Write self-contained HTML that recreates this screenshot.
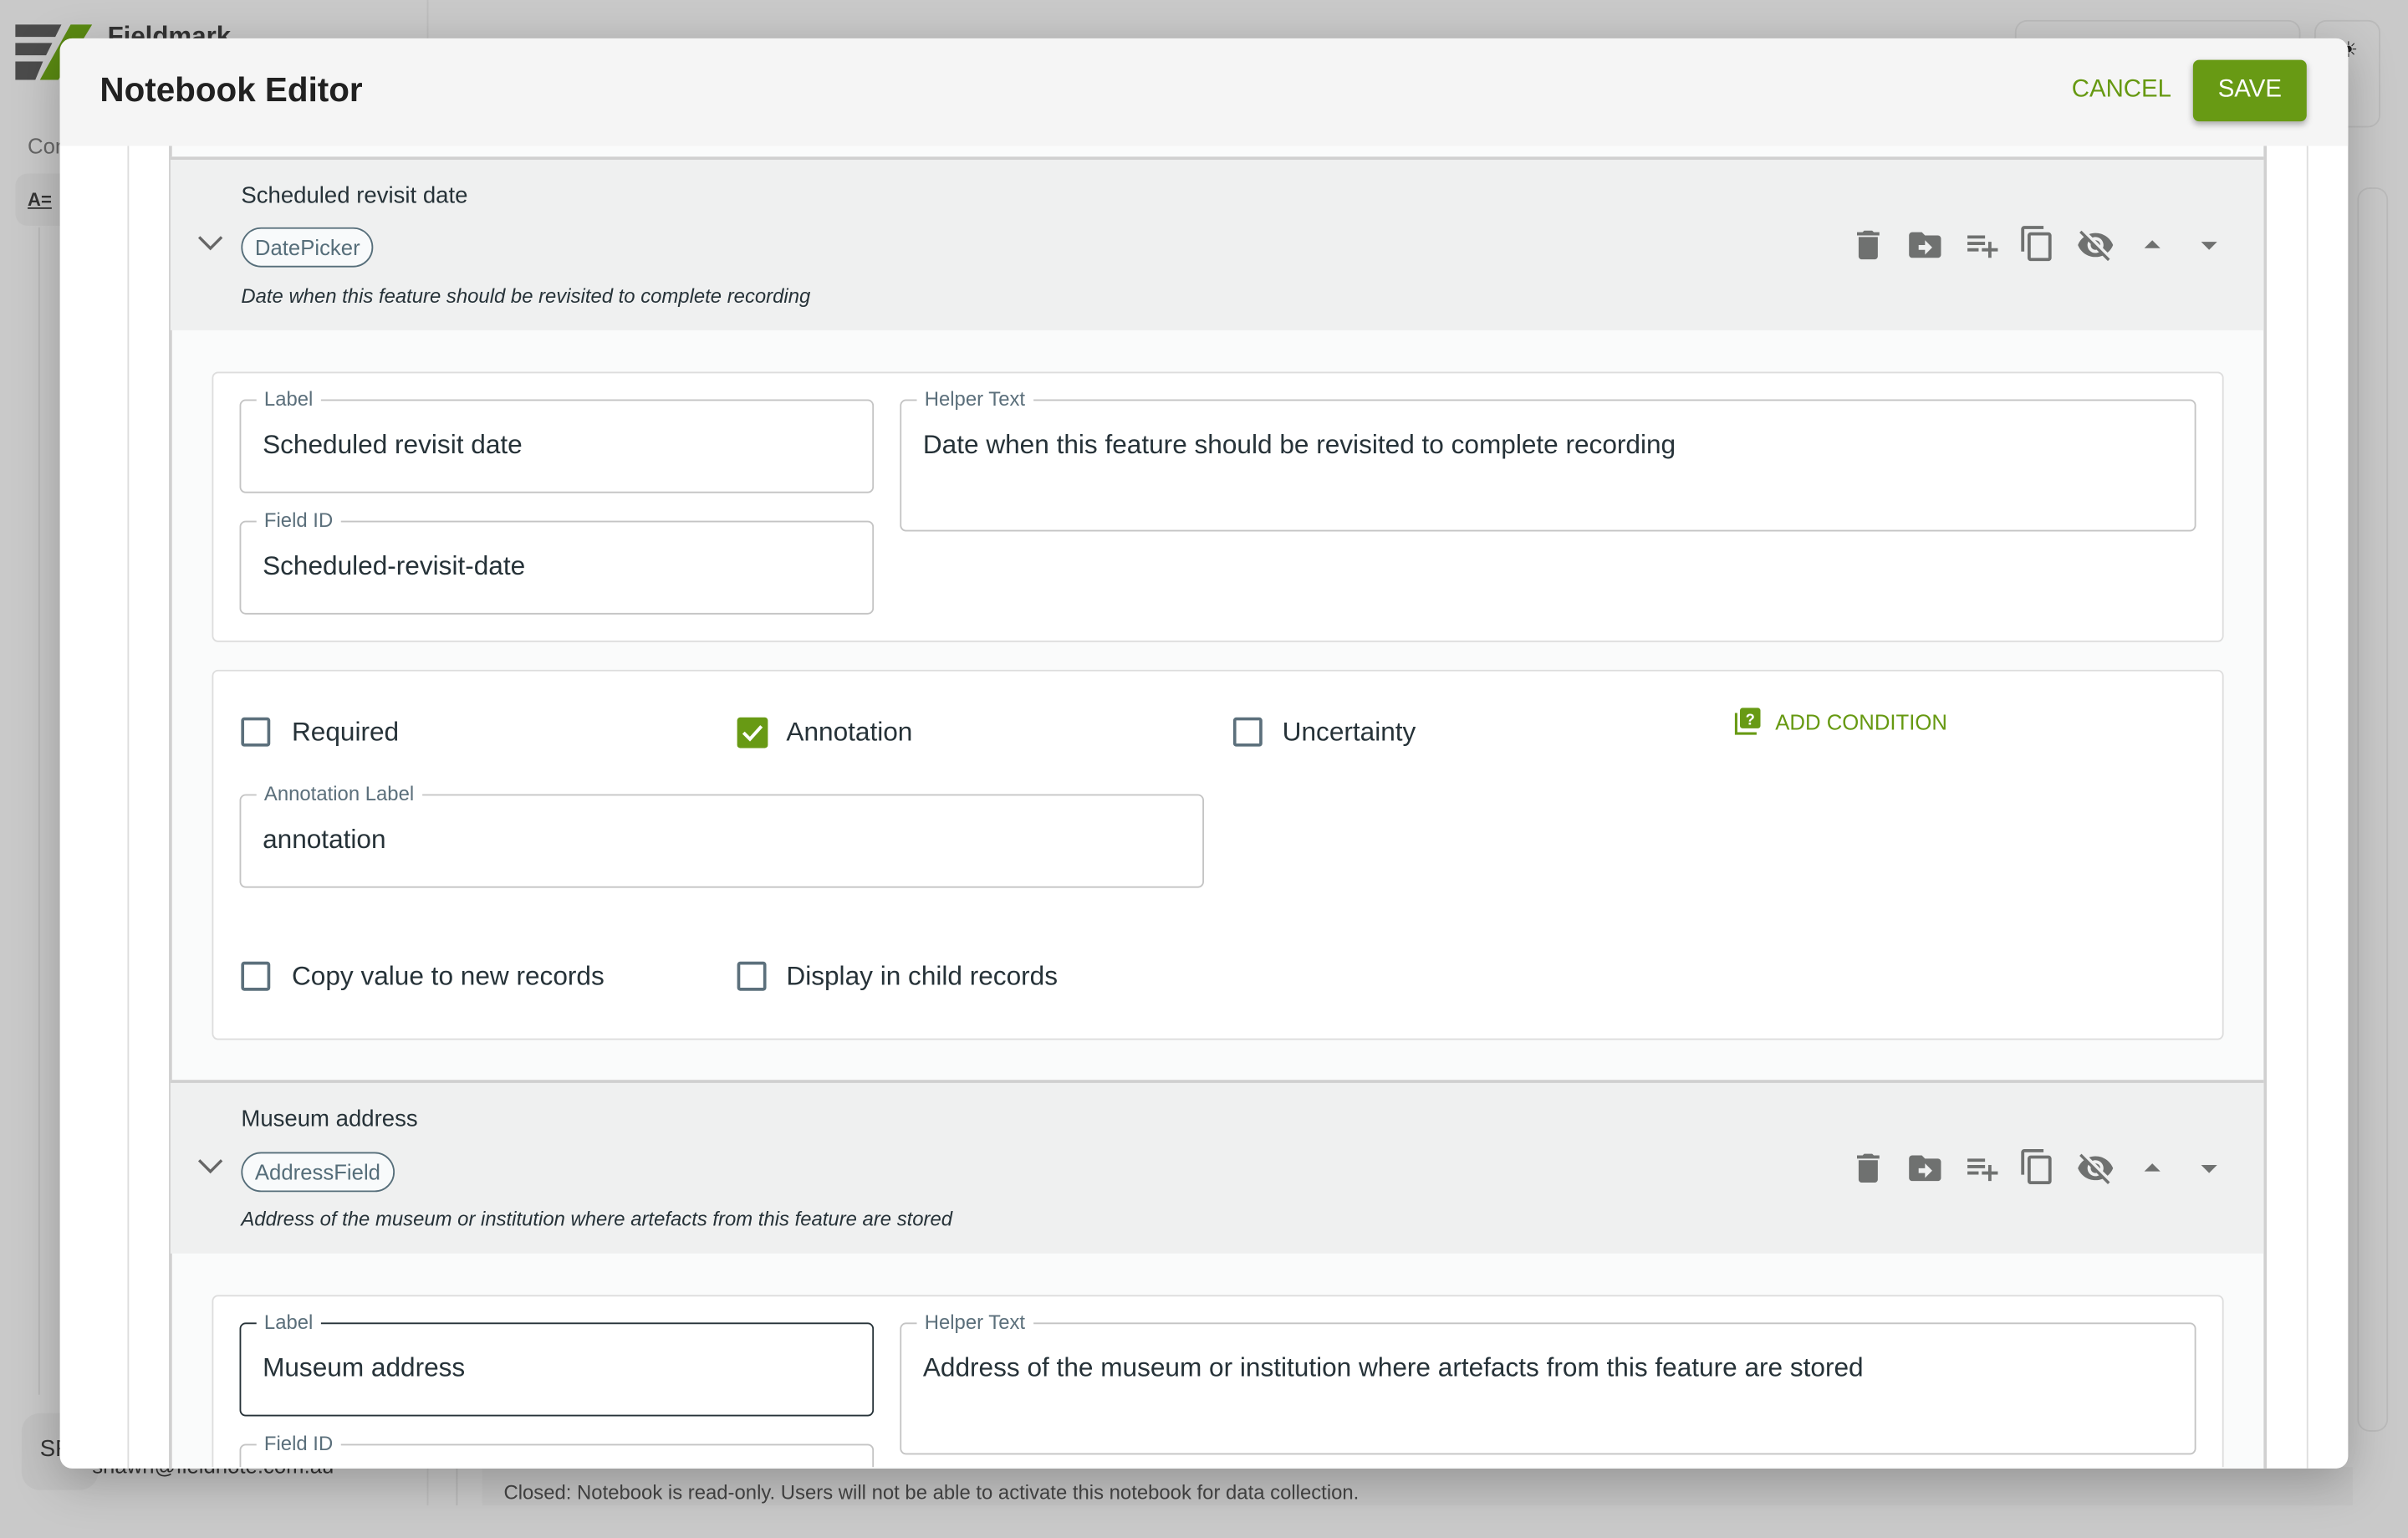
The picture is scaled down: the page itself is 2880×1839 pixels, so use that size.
<!DOCTYPE html>
<html><head><meta charset="utf-8">
<style>
*{box-sizing:border-box;margin:0;padding:0}
html,body{width:2880px;height:1800px;overflow:hidden;background:#c9c9c9}
#s{position:absolute;left:0;top:0;width:1568px;height:980px;transform:scale(1.836735);transform-origin:0 0;font-family:"Liberation Sans",sans-serif;color:#263238}
.a{position:absolute}
.f{position:absolute;border:1px solid #c4c4c4;border-radius:4px;background:#fff}
.f .l{position:absolute;left:10px;top:-9px;background:#fff;padding:0 5px;font-size:13px;color:#5b6f7b;line-height:16px}
.f .v{position:absolute;left:14px;top:18px;font-size:17.2px;color:#263238;white-space:nowrap}
.cb{position:absolute;width:19px;height:19px;border:2px solid #5c707c;border-radius:2px}
.ct{position:absolute;font-size:17.2px;color:#263238;white-space:nowrap}
.ic{position:absolute;width:25px;height:25px;fill:#6f7170}
.chip{position:absolute;height:26px;border:1px solid #566e7a;border-radius:13px;font-size:14px;color:#566e7a;line-height:24px;padding:0 8px;background:#f8fafb}
#clip{position:absolute;left:0;top:0;width:1568px;height:980px;clip-path:inset(95px 0 25px 0)}
</style></head><body><div id="s">
<!-- background app -->
<svg class="a" style="left:8px;top:14px" width="56" height="40" viewBox="0 0 56 40"><path d="M2 2h30l-4 8H2z M2 14h24l-4 8H2z M2 26h18l-5 12H2z" fill="#4b4b4b"/><path d="M38 2h14l-22 36H18z" fill="#5a8a12"/></svg>
<div class="a" style="left:70px;top:14px;font-size:17px;font-weight:bold;color:#333">Fieldmark</div>
<div class="a" style="left:18px;top:87px;font-size:14px;color:#666">Con</div>
<div class="a" style="left:10px;top:113px;width:40px;height:34px;border-radius:8px;background:#c2c2c2"></div>
<div class="a" style="left:18px;top:123px;font-size:12px;font-weight:bold;color:#333;text-decoration:underline">A=</div>
<div class="a" style="left:25px;top:148px;width:1px;height:760px;background:#b8b8b8"></div>
<div class="a" style="left:278px;top:0;width:1px;height:980px;background:#bdbdbd"></div>
<div class="a" style="left:1312px;top:13px;width:186px;height:70px;border:1px solid #bbb;border-radius:8px"></div>
<div class="a" style="left:1507px;top:13px;width:43px;height:70px;border:1px solid #bbb;border-radius:8px"></div>
<div class="a" style="left:1523px;top:24px;font-size:14px;color:#222">☀</div>
<div class="a" style="left:1535px;top:122px;width:20px;height:810px;border:1px solid #bbb;border-radius:8px"></div>
<div class="a" style="left:14px;top:920px;width:50px;height:50px;border-radius:12px;background:#c2c2c2"></div>
<div class="a" style="left:26px;top:935px;font-size:15px;color:#333">SF</div>
<div class="a" style="left:60px;top:946px;font-size:14px;color:#333">shawn@fieldnote.com.au</div>
<div class="a" style="left:297px;top:950px;width:1px;height:30px;background:#b8b8b8"></div>
<div class="a" style="left:314px;top:955px;width:1218px;height:25px;background:#c4c4c4"></div>
<div class="a" style="left:328px;top:964px;font-size:13px;color:#444">Closed: Notebook is read-only. Users will not be able to activate this notebook for data collection.</div>

<!-- modal -->
<div class="a" style="left:39px;top:25px;width:1490px;height:931px;background:#fff;border-radius:8px;overflow:hidden;box-shadow:0 8px 30px rgba(0,0,0,.25)">
 <div class="a" style="left:0;top:0;width:1490px;height:70px;background:#f5f5f5"></div>
 <div class="a" style="left:26px;top:21px;font-size:22px;font-weight:bold;color:#212121">Notebook Editor</div>
 <div class="a" style="left:1310px;top:25px;font-size:16px;color:#669911">CANCEL</div>
 <div class="a" style="left:1389px;top:14px;width:74px;height:40px;background:#689a14;border-radius:4px;box-shadow:0 2px 4px rgba(0,0,0,.3);color:#fff;font-size:16px;text-align:center;line-height:40px">SAVE</div>
 <div class="a" style="left:44px;top:70px;width:1px;height:870px;background:#ddd"></div>
 <div class="a" style="left:1463px;top:70px;width:1px;height:870px;background:#ddd"></div>
 <div class="a" style="left:71px;top:70px;width:1366px;height:870px;background:#fafbfb;border-left:2px solid #d0d0d0;border-right:2px solid #d0d0d0"></div>
</div>

<svg width="0" height="0" style="position:absolute"><defs>
<g id="i1"><path d="M6 19c0 1.1.9 2 2 2h8c1.1 0 2-.9 2-2V7H6v12zM19 4h-3.5l-1-1h-5l-1 1H5v2h14V4z"/></g>
<g id="i2"><path d="M20 6h-8l-2-2H4c-1.1 0-2 .9-2 2v12c0 1.1.9 2 2 2h16c1.1 0 2-.9 2-2V8c0-1.1-.9-2-2-2zm-8 12v-3H8v-3h4V9l4.5 4.5z"/></g>
<g id="i3"><path d="M14 10H3v2h11v-2zm0-4H3v2h11V6zm4 8v-4h-2v4h-4v2h4v4h2v-4h4v-2h-4zM3 16h7v-2H3v2z"/></g>
<g id="i4"><path d="M16 1H4c-1.1 0-2 .9-2 2v14h2V3h12V1zm3 4H8c-1.1 0-2 .9-2 2v14c0 1.1.9 2 2 2h11c1.1 0 2-.9 2-2V7c0-1.1-.9-2-2-2zm0 16H8V7h11v14z"/></g>
<g id="i5"><path d="M12 7c2.76 0 5 2.24 5 5 0 .65-.13 1.26-.36 1.83l2.92 2.92c1.51-1.26 2.7-2.89 3.430-4.75-1.73-4.39-6-7.5-11-7.5-1.4 0-2.74.25-3.98.7l2.16 2.16C10.74 7.13 11.35 7 12 7zM2 4.27l2.28 2.28.46.46C3.08 8.3 1.78 10.02 1 12c1.73 4.39 6 7.5 11 7.5 1.55 0 3.03-.3 4.38-.84l.42.42L19.73 22 21 20.73 3.27 3 2 4.27zM7.53 9.8l1.55 1.55c-.05.21-.08.43-.08.65 0 1.66 1.34 3 3 3 .22 0 .44-.03.65-.08l1.55 1.55c-.67.33-1.41.53-2.2.53-2.76 0-5-2.24-5-5 0-.79.2-1.53.53-2.2zm4.31-.78l3.15 3.15.02-.16c0-1.66-1.34-3-3-3l-.17.01z"/></g>
<g id="i6"><path d="M7 14l5-5 5 5z"/></g>
<g id="i7"><path d="M7 10l5 5 5-5z"/></g>
</defs></svg>

<div id="clip">
<!-- section 1 header -->
<div class="a" style="left:111px;top:102px;width:1363px;height:113px;background:#eff0f0;border-top:2px solid #d0d0d0"></div>
<div class="a" style="left:157px;top:119px;font-size:15px">Scheduled revisit date</div>
<svg class="a" style="left:126px;top:147px" width="22" height="22" viewBox="0 0 24 24"><path d="M4 8l8 8 8-8" fill="none" stroke="#666" stroke-width="2"/></svg>
<div class="chip" style="left:157px;top:148px">DatePicker</div>
<div class="a" style="left:157px;top:185px;font-size:13px;font-style:italic">Date when this feature should be revisited to complete recording</div>

<!-- section 2 header -->
<div class="a" style="left:111px;top:703px;width:1363px;height:113px;background:#eff0f0;border-top:2px solid #d0d0d0"></div>
<div class="a" style="left:157px;top:720px;font-size:15px">Museum address</div>
<svg class="a" style="left:126px;top:748px" width="22" height="22" viewBox="0 0 24 24"><path d="M4 8l8 8 8-8" fill="none" stroke="#666" stroke-width="2"/></svg>
<div class="chip" style="left:157px;top:750px">AddressField</div>
<div class="a" style="left:157px;top:786px;font-size:13px;font-style:italic">Address of the museum or institution where artefacts from this feature are stored</div>

<svg class="ic" style="left:1204px;top:147px" viewBox="0 0 24 24"><use href="#i1"/></svg>
<svg class="ic" style="left:1241px;top:147px" viewBox="0 0 24 24"><use href="#i2"/></svg>
<svg class="ic" style="left:1278px;top:147px" viewBox="0 0 24 24"><use href="#i3"/></svg>
<svg class="ic" style="left:1314px;top:146px" viewBox="0 0 24 24"><use href="#i4"/></svg>
<svg class="ic" style="left:1352px;top:147px" viewBox="0 0 24 24"><use href="#i5"/></svg>
<svg class="ic" style="left:1389px;top:147px" viewBox="0 0 24 24"><use href="#i6"/></svg>
<svg class="ic" style="left:1426px;top:147px" viewBox="0 0 24 24"><use href="#i7"/></svg>
<svg class="ic" style="left:1204px;top:748px" viewBox="0 0 24 24"><use href="#i1"/></svg>
<svg class="ic" style="left:1241px;top:748px" viewBox="0 0 24 24"><use href="#i2"/></svg>
<svg class="ic" style="left:1278px;top:748px" viewBox="0 0 24 24"><use href="#i3"/></svg>
<svg class="ic" style="left:1314px;top:747px" viewBox="0 0 24 24"><use href="#i4"/></svg>
<svg class="ic" style="left:1352px;top:748px" viewBox="0 0 24 24"><use href="#i5"/></svg>
<svg class="ic" style="left:1389px;top:748px" viewBox="0 0 24 24"><use href="#i6"/></svg>
<svg class="ic" style="left:1426px;top:748px" viewBox="0 0 24 24"><use href="#i7"/></svg>

<!-- card 1 -->
<div class="a" style="left:138px;top:242px;width:1310px;height:176px;background:#fff;border:1px solid #ddd;border-radius:4px"></div>
<div class="f" style="left:156px;top:260px;width:413px;height:61px"><span class="l">Label</span><span class="v">Scheduled revisit date</span></div>
<div class="f" style="left:156px;top:339px;width:413px;height:61px"><span class="l">Field ID</span><span class="v">Scheduled-revisit-date</span></div>
<div class="f" style="left:586px;top:260px;width:844px;height:86px"><span class="l">Helper Text</span><span class="v">Date when this feature should be revisited to complete recording</span></div>

<!-- card 2 -->
<div class="a" style="left:138px;top:436px;width:1310px;height:241px;background:#fff;border:1px solid #ddd;border-radius:4px"></div>
<div class="cb" style="left:157px;top:467px"></div><div class="ct" style="left:190px;top:466px">Required</div>
<div class="a" style="left:480px;top:467px;width:20px;height:20px;background:#689a14;border-radius:2px"><svg width="20" height="20" viewBox="0 0 24 24"><path d="M5 12l5 5 9-10" fill="none" stroke="#fff" stroke-width="2.6"/></svg></div>
<div class="ct" style="left:512px;top:466px">Annotation</div>
<div class="cb" style="left:803px;top:467px"></div><div class="ct" style="left:835px;top:466px">Uncertainty</div>
<svg class="a" style="left:1128px;top:460px" width="20" height="20" viewBox="0 0 24 24"><path d="M2 5h2v15h15v2H2z" fill="#689a14"/><rect x="6" y="1" width="16" height="16" rx="2" fill="#689a14"/><text x="14" y="14" font-size="12" font-weight="bold" fill="#fff" text-anchor="middle" font-family="Liberation Sans">?</text></svg>
<div class="a" style="left:1156px;top:462px;font-size:14px;color:#669911">ADD CONDITION</div>
<div class="f" style="left:156px;top:517px;width:628px;height:61px"><span class="l">Annotation Label</span><span class="v">annotation</span></div>
<div class="cb" style="left:157px;top:626px"></div><div class="ct" style="left:190px;top:625px">Copy value to new records</div>
<div class="cb" style="left:480px;top:626px"></div><div class="ct" style="left:512px;top:625px">Display in child records</div>

<!-- card 3 -->
<div class="a" style="left:138px;top:843px;width:1310px;height:130px;background:#fff;border:1px solid #ddd;border-radius:4px"></div>
<div class="f" style="left:156px;top:861px;width:413px;height:61px;border:1.5px solid #263238"><span class="l">Label</span><span class="v">Museum address</span></div>
<div class="f" style="left:156px;top:940px;width:413px;height:61px"><span class="l">Field ID</span></div>
<div class="f" style="left:586px;top:861px;width:844px;height:86px"><span class="l">Helper Text</span><span class="v">Address of the museum or institution where artefacts from this feature are stored</span></div>
</div>
</div></body></html>
